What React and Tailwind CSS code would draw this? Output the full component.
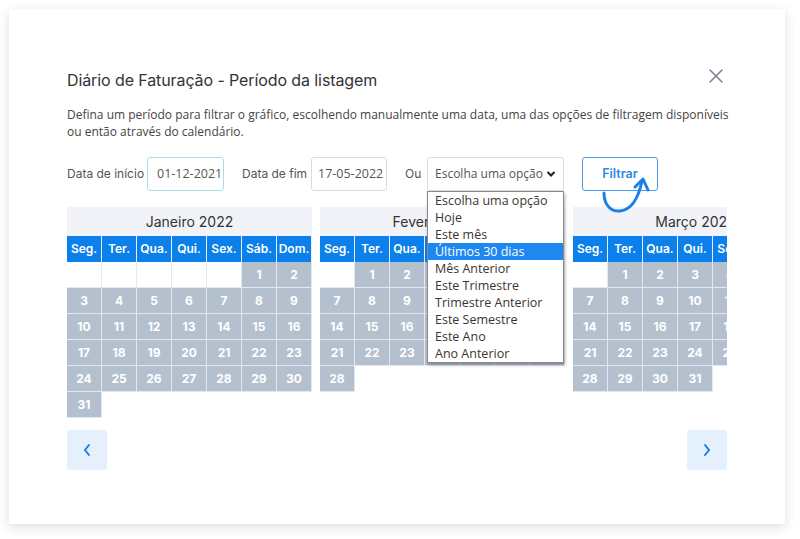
import React from 'react';

const poppins = { fontFamily: 'Inter, "Noto Sans", sans-serif' };
const open = { fontFamily: '"Open Sans", "Noto Sans", sans-serif' };

const weekDays = ['Seg.', 'Ter.', 'Qua.', 'Qui.', 'Sex.', 'Sáb.', 'Dom.'];

const months = [
  { name: 'Janeiro 2022', offset: 5, days: 31 },
  { name: 'Fevereiro 2022', offset: 1, days: 28 },
  { name: 'Março 2022', offset: 1, days: 31 },
];

const options = [
  'Escolha uma opção',
  'Hoje',
  'Este mês',
  'Últimos 30 dias',
  'Mês Anterior',
  'Este Trimestre',
  'Trimestre Anterior',
  'Este Semestre',
  'Este Ano',
  'Ano Anterior',
];

function Month({ month }) {
  const cells = [];
  for (let i = 0; i < month.offset; i++) cells.push(null);
  for (let d = 1; d <= month.days; d++) cells.push(d);
  return (
    <div className="w-[245px] shrink-0" style={poppins}>
      <div className="h-[29px] bg-[#f1f3f8] flex items-center justify-center text-[14px] text-[#333] whitespace-nowrap">
        {month.name}
      </div>
      <div className="grid grid-cols-7">
        {weekDays.map((w) => (
          <div key={w} className="h-[26px] bg-[#0b7fea] border-r border-[#e8eef6] last:border-r-0 flex items-center justify-center text-[12px] font-semibold text-white">
            {w}
          </div>
        ))}
        {cells.map((d, i) => (
          <div
            key={i}
            className={
              'h-[26px] border-r border-b border-[#e4e8ee] flex items-center justify-center text-[12px] font-bold text-white ' +
              (d ? 'bg-[#b5c0cf]' : 'bg-white')
            }
          >
            {d}
          </div>
        ))}
      </div>
    </div>
  );
}

function Arrows() {
  return (
    <svg className="absolute inset-0 pointer-events-none" width="800" height="539" viewBox="0 0 800 539" fill="none" stroke="#1a7fe6" strokeWidth="3" strokeLinecap="round" strokeLinejoin="round">
      <path d="M604 193 C604 206 612 212 620 211 C630 210 638 200 642 181" />
      <path d="M635 187 L643 179 L648 190" />
      <path d="M507 271 C510 283 518 287 525 286 C535 284 543 276 547 260" />
      <path d="M539 266 L548 258 L551 270" />
    </svg>
  );
}

export default function App() {
  return (
    <div className="relative w-[800px] h-[539px] bg-white overflow-hidden">
      <div className="absolute left-[9px] top-[9px] w-[776px] h-[515px] bg-white shadow-[0_3px_10px_rgba(60,70,90,0.18)] px-[58px] pt-[59px]">
        <div className="flex items-center justify-between h-[24px]">
          <h2 className="text-[16px] text-[#333] tracking-[-0.1px]" style={poppins}>
            Diário de Faturação - Período da listagem
          </h2>
          <svg width="14" height="14" viewBox="0 0 14 14" className="mr-[4px] -mt-[8px]" stroke="#7c8594" strokeWidth="1.6" strokeLinecap="round">
            <path d="M1 1 L13 13 M13 1 L1 13" />
          </svg>
        </div>

        <p className="mt-[14px] text-[12px] leading-[17px] text-[#444] whitespace-nowrap" style={{ ...open, fontStretch: '92%' }}>
          Defina um período para filtrar o gráfico, escolhendo manualmente uma data, uma das opções de filtragem disponíveis
          <br />
          ou então através do calendário.
        </p>

        <div className="mt-[17px] flex items-center h-[34px] whitespace-nowrap">
          <span className="text-[12px] text-[#555] w-[75px] shrink-0" style={poppins}>Data de início</span>
          <div className="ml-[5px] w-[77px] shrink-0 h-[34px] border border-[#a9dde9] rounded-[3px] flex items-center px-[9px] text-[12.5px] text-[#555]" style={open}>
            01-12-2021
          </div>
          <span className="ml-[18px] w-[63px] shrink-0 text-[12px] text-[#555]" style={poppins}>Data de fim</span>
          <div className="ml-[6px] w-[76px] shrink-0 h-[34px] border border-[#d9dce1] rounded-[3px] flex items-center px-[6px] text-[12.5px] text-[#555]" style={open}>
            17-05-2022
          </div>
          <span className="ml-[18px] w-[16px] shrink-0 text-[12px] text-[#555]" style={poppins}>Ou</span>
          <div className="relative ml-[6px] shrink-0">
            <div className="w-[137px] h-[34px] border border-[#d9dce1] rounded-[3px] flex items-center justify-between px-[7px] text-[12px] text-[#555]" style={open}>
              <span>Escolha uma opção</span>
              <svg width="10" height="8" viewBox="0 0 10 8" fill="none" stroke="#222" strokeWidth="2">
                <path d="M1.5 2 L5 5.5 L8.5 2" />
              </svg>
            </div>
            <div className="absolute left-0 top-[34px] w-[137px] bg-white border border-[#8a8a8a] shadow-[1px_2px_3px_rgba(0,0,0,0.3)] z-10" style={open}>
              {options.map((o) => (
                <div
                  key={o}
                  className={
                    'h-[17px] leading-[17px] px-[7px] text-[12.5px] ' +
                    (o === 'Últimos 30 dias' ? 'bg-[#1e88f0] text-white' : 'text-[#3b3530]')
                  }
                >
                  {o}
                </div>
              ))}
            </div>
          </div>
          <button className="ml-[18px] w-[76px] shrink-0 h-[34px] border border-[#4b99ea] rounded-[3px] text-[12.5px] font-semibold text-[#2d8ae6] bg-white" style={poppins}>
            Filtrar
          </button>
        </div>

        <div className="mt-[16px] w-[660px] overflow-hidden flex gap-[8px]">
          {months.map((m) => (
            <Month key={m.name} month={m} />
          ))}
        </div>

        <div className="mt-[12px] w-[660px] flex justify-between">
          <button className="w-[40px] h-[40px] bg-[#e4f0fc] rounded-[2px] flex items-center justify-center">
            <svg width="10" height="14" viewBox="0 0 10 14" fill="none" stroke="#1a7fe0" strokeWidth="2" strokeLinecap="round">
              <path d="M7 2 L3 7 L7 12" />
            </svg>
          </button>
          <button className="w-[40px] h-[40px] bg-[#e4f0fc] rounded-[2px] flex items-center justify-center">
            <svg width="10" height="14" viewBox="0 0 10 14" fill="none" stroke="#1a7fe0" strokeWidth="2" strokeLinecap="round">
              <path d="M3 2 L7 7 L3 12" />
            </svg>
          </button>
        </div>
      </div>
      <Arrows />
    </div>
  );
}
